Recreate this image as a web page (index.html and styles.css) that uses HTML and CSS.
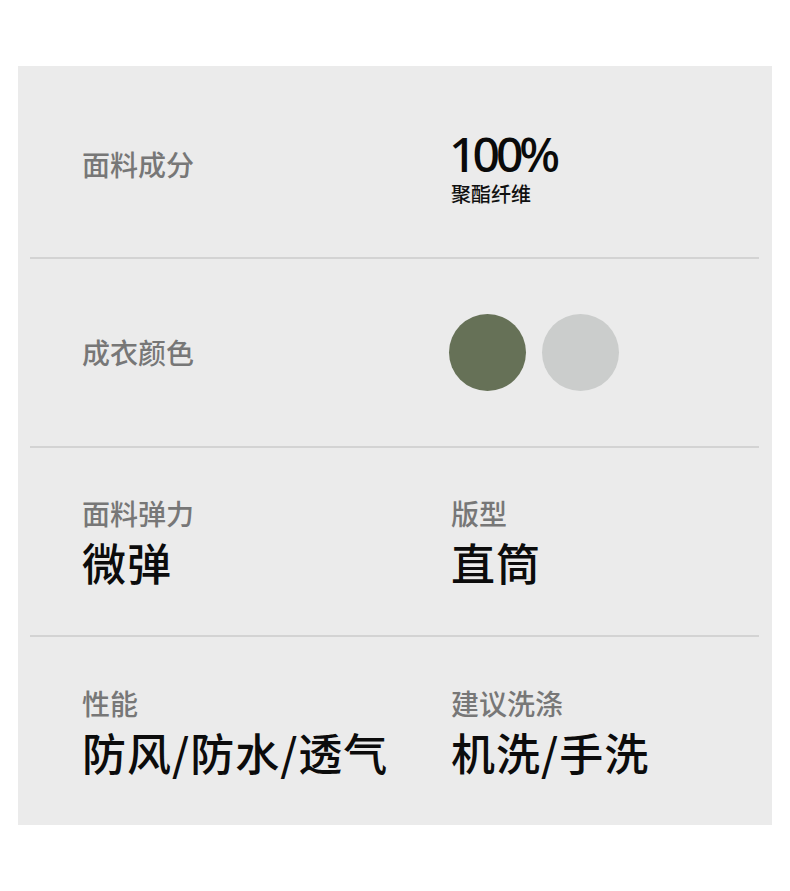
FILE: index.html
```html
<!DOCTYPE html>
<html lang="zh-CN">
<head>
<meta charset="utf-8">
<link rel="stylesheet" href="styles.css">
</head>
<body>
<div class="panel">
  <div class="row row-first">
    <div class="cell cell-top"><div class="label">面料成分</div></div>
    <div class="cell comp">
      <div class="pct">100%</div>
      <div class="pct-sub">聚酯纤维</div>
    </div>
  </div>
  <div class="row">
    <div class="cell"><div class="label">成衣颜色</div></div>
    <div class="cell swatches">
      <span class="swatch swatch-green"></span>
      <span class="swatch swatch-grey"></span>
    </div>
  </div>
  <div class="row row-pair">
    <div class="cell">
      <div class="label">面料弹力</div>
      <div class="value">微弹</div>
    </div>
    <div class="cell">
      <div class="label">版型</div>
      <div class="value">直筒</div>
    </div>
  </div>
  <div class="row row-pair row-last">
    <div class="cell">
      <div class="label">性能</div>
      <div class="value">防风/防水/透气</div>
    </div>
    <div class="cell">
      <div class="label">建议洗涤</div>
      <div class="value">机洗/手洗</div>
    </div>
  </div>
</div>
</body>
</html>
```

FILE: styles.css
```css
html, body {
  margin: 0;
  padding: 0;
  background: #ffffff;
}
body {
  font-family: "Noto Sans CJK SC", "Noto Sans", sans-serif;
  width: 790px;
  height: 891px;
  overflow: hidden;
}
.panel {
  margin: 66px 0 0 18px;
  width: 754px;
  height: 759px;
  box-sizing: border-box;
  background: #ebebeb;
  padding: 0 13px 0 12px;
}
.row {
  box-sizing: border-box;
  height: 189px;
  border-bottom: 2px solid #d3d3d3;
  display: grid;
  grid-template-columns: 369px 1fr;
  padding-left: 52px;
  align-items: center;
}
.row-first {
  height: 193px;
  align-items: start;
}
.row-last {
  height: 188px;
  border-bottom: none;
}
.cell {
  display: flex;
  flex-direction: column;
  align-items: flex-start;
}
.cell-top {
  margin-top: 78px;
}
.label {
  font-size: 28px;
  font-weight: 500;
  line-height: 41px;
  color: #777777;
}
.value {
  font-size: 44px;
  font-weight: 500;
  line-height: 56px;
  letter-spacing: 1px;
  color: #0c0c0c;
}
.comp {
  margin-top: 68px;
}
.pct {
  font-family: "Noto Sans", sans-serif;
  font-size: 48px;
  font-weight: 500;
  line-height: 40px;
  letter-spacing: -4px;
  margin-left: -2px;
  color: #0a0a0a;
}
.pct-sub {
  font-size: 20px;
  font-weight: 500;
  line-height: 24px;
  color: #111;
  margin-top: 8px;
}
.swatches {
  flex-direction: row;
  gap: 16px;
  margin-left: -2px;
}
.swatch {
  display: block;
  width: 77px;
  height: 77px;
  border-radius: 50%;
}
.swatch-green {
  background: #667157;
}
.swatch-grey {
  background: #cbcdcc;
}
```
